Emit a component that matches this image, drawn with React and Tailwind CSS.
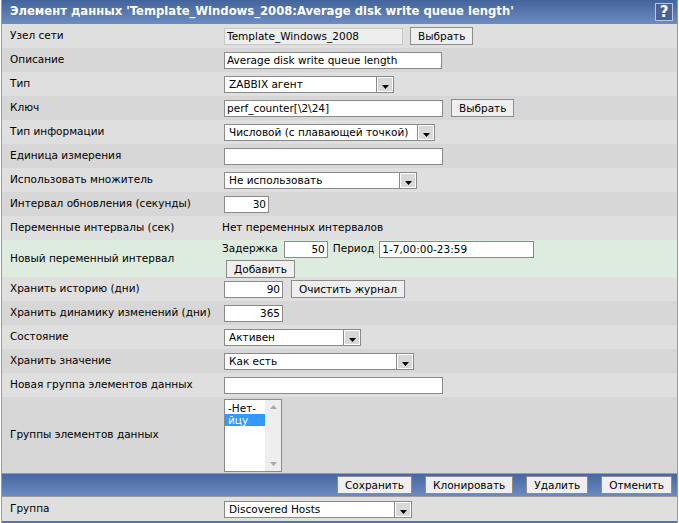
import React from 'react'

const font = { fontFamily: '"DejaVu Sans", Verdana, sans-serif' }

const Input = ({ w, value = '', right, gray }) => (
    <div
        className={`h-[17px] border border-[#8a8a8a] px-[2px] text-[10.5px] leading-[15px] text-black whitespace-nowrap overflow-hidden ${gray ? 'bg-[#eeeeee] border-[#c8c8c8]' : 'bg-white'} ${right ? 'text-right' : ''}`}
        style={{ width: w }}
    >
        {value}
    </div>
)

const Button = ({ children, className = '' }) => (
    <div className={`h-[18px] border border-[#8c8c8c] bg-[#efefef] px-[7px] text-[10.5px] leading-[16px] text-black whitespace-nowrap ${className}`}>
        {children}
    </div>
)

const Select = ({ w, value }) => (
    <div className="flex h-[17px] border border-[#8a8a8a] bg-white" style={{ width: w }}>
        <div className="flex-1 pl-[4px] text-[10.5px] leading-[15px] text-black whitespace-nowrap overflow-hidden">{value}</div>
        <div className="w-[17px] border-l border-[#8a8a8a] bg-white p-[1px]">
            <div className="flex h-full items-end justify-center bg-[#d8d8d8] pb-[2px]">
                <svg width="7" height="4" viewBox="0 0 7 4"><path d="M0 0h7L3.5 4z" fill="#000" /></svg>
            </div>
        </div>
    </div>
)

const Row = ({ label, bg, h = 'h-[24px]', children }) => (
    <div className={`flex items-center ${h} ${bg}`}>
        <div className="w-[222px] shrink-0 pl-[8px] text-[10.5px] text-black">{label}</div>
        <div className="flex items-center gap-[8px]">{children}</div>
    </div>
)

const L = 'bg-[#dfdfdf]'
const D = 'bg-[#d7d7d7]'

export default function App() {
    return (
        <div className="w-[679px] h-[523px] bg-white" style={font}>
            <div className="border-x border-[#9c9c9c] mx-[1px]">
                {/* Header */}
                <div className="flex h-[24px] items-center justify-between bg-gradient-to-b from-[#43639c] to-[#6d8cc0] pl-[8px] pr-[4px]">
                    <span className="text-[11.6px] font-bold text-white">
                        Элемент данных 'Template_Windows_2008:Average disk write queue length'
                    </span>
                    <div className="flex h-[18px] w-[18px] items-center justify-center border border-[#b9c6de] bg-[#4d6192] text-[15px] font-bold leading-none text-white">
                        ?
                    </div>
                </div>

                <Row label="Узел сети" bg={L}>
                    <Input w={179} value="Template_Windows_2008" gray />
                    <Button className="ml-[-1px]">Выбрать</Button>
                </Row>
                <Row label="Описание" bg={D}>
                    <Input w={218} value="Average disk write queue length" />
                </Row>
                <Row label="Тип" bg={L}>
                    <Select w={170} value="ZABBIX агент" />
                </Row>
                <Row label="Ключ" bg={D}>
                    <Input w={219} value="perf_counter[\2\24]" />
                    <Button>Выбрать</Button>
                </Row>
                <Row label="Тип информации" bg={L}>
                    <Select w={211} value="Числовой (с плавающей точкой)" />
                </Row>
                <Row label="Единица измерения" bg={D}>
                    <Input w={219} />
                </Row>
                <Row label="Использовать множитель" bg={L}>
                    <Select w={193} value="Не использовать" />
                </Row>
                <Row label="Интервал обновления (секунды)" bg={D}>
                    <Input w={45} value="30" right />
                </Row>
                <Row label="Переменные интервалы (сек)" bg={L}>
                    <span className="ml-[-2px] text-[10.5px] text-black">Нет переменных интервалов</span>
                </Row>
                <div className="flex items-center h-[37px] bg-[#deecdf]">
                    <div className="w-[222px] shrink-0 pl-[8px] text-[10.5px] text-black">Новый переменный интервал</div>
                    <div className="ml-[-2px] flex flex-col gap-[2px] pt-[1px]">
                        <div className="flex items-center text-[10.5px] text-black">
                            <span>Задержка</span>
                            <div className="ml-[6px]"><Input w={44} value="50" right /></div>
                            <span className="ml-[5px]">Период</span>
                            <div className="ml-[5px]"><Input w={155} value="1-7,00:00-23:59" /></div>
                        </div>
                        <Button className="ml-[4px] self-start">Добавить</Button>
                    </div>
                </div>
                <Row label="Хранить историю (дни)" bg={L}>
                    <Input w={59} value="90" right />
                    <Button>Очистить журнал</Button>
                </Row>
                <Row label="Хранить динамику изменений (дни)" bg={D}>
                    <Input w={59} value="365" right />
                </Row>
                <Row label="Состояние" bg={L}>
                    <Select w={137} value="Активен" />
                </Row>
                <Row label="Хранить значение" bg={D}>
                    <Select w={190} value="Как есть" />
                </Row>
                <Row label="Новая группа элементов данных" bg={L}>
                    <Input w={219} />
                </Row>
                <Row label="Группы элементов данных" bg={D} h="h-[76px]">
                    <div className="flex h-[73px] w-[58px] border border-[#8a8a8a] bg-white">
                        <div className="flex-1 pt-[2px] text-[10.5px] leading-[12px] text-black">
                            <div className="pl-[3px]">-Нет-</div>
                            <div className="bg-[#3399ff] pl-[3px] text-white">йцу</div>
                        </div>
                        <div className="flex w-[16px] flex-col items-center justify-between bg-[#eeeeee] py-[5px]">
                            <svg width="7" height="4" viewBox="0 0 7 4"><path d="M3.5 0L7 4H0z" fill="#a8a8a8" /></svg>
                            <svg width="7" height="4" viewBox="0 0 7 4"><path d="M0 0h7L3.5 4z" fill="#a8a8a8" /></svg>
                        </div>
                    </div>
                </Row>

                {/* Button bar */}
                <div className="flex h-[24px] items-center justify-end gap-[13px] border-y border-[#9c9c9c] bg-gradient-to-b from-[#4767a1] to-[#6b8ac0] pr-[5px]">
                    <Button>Сохранить</Button>
                    <Button>Клонировать</Button>
                    <Button>Удалить</Button>
                    <Button>Отменить</Button>
                </div>

                <Row label="Группа" bg={L}>
                    <Select w={188} value="Discovered Hosts" />
                </Row>
                <div className="h-[3px] bg-[#5676ad]" />
            </div>
        </div>
    )
}
